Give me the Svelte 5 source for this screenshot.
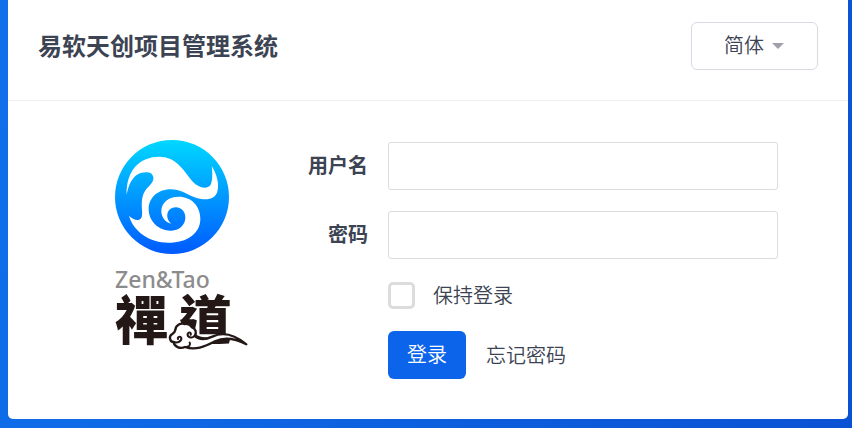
<script lang="ts">
  let lang = $state("zh-cn");
  let account = $state("");
  let password = $state("");
  let keepLogin = $state(false);

  const langs = [
    { value: "zh-cn", label: "简体" },
    { value: "zh-tw", label: "繁體" },
    { value: "en", label: "English" },
  ];

  function login(e: SubmitEvent) {
    e.preventDefault();
  }
</script>

<main class="login-panel">
  <header class="panel-head">
    <h1>易软天创项目管理系统</h1>
    <div class="lang-box">
      <select class="lang-select" aria-label="语言" bind:value={lang}>
        {#each langs as item}
          <option value={item.value}>{item.label}</option>
        {/each}
      </select>
      <svg class="lang-caret" viewBox="0 0 12 6" aria-hidden="true">
        <path d="M0 0h12L6 6z" fill="#a0a0ad" />
      </svg>
    </div>
  </header>

  <div class="panel-body">
    <svg class="logo" viewBox="0 0 134 226" role="img" aria-label="Zen&Tao 禪道">
      <defs>
        <linearGradient id="logo-fill" x1="0" y1="0" x2="0" y2="1">
          <stop offset="0" stop-color="#00d8ff" />
          <stop offset="0.5" stop-color="#0098ff" />
          <stop offset="1" stop-color="#005aff" />
        </linearGradient>
      </defs>
      <circle cx="57" cy="57" r="57" fill="url(#logo-fill)" />
      <g transform="translate(-15 -10) scale(0.33333)">
        <path
          fill="#fff"
          d="M80 195C78 120 120 80 178 80C225 80 248 115 272 148C292 174 320 180 331 166C338 155 338 130 335 108C350 130 360 165 351 188C340 212 312 210 290 204C262 196 245 178 212 178C172 178 146 205 146 237C146 275 178 303 214 302C240 301 256 284 256 262C256 245 243 232 228 232C210 232 200 245 202 260C203 270 208 276 214 281C195 278 184 260 184 243C184 218 206 200 236 200C274 200 301 228 301 266C301 310 262 338 205 338C150 338 100 305 87 257C95 265 105 271 115 270C127 268 127 255 126 240C124 215 126 195 137 180C148 166 162 158 160 142C157 125 138 125 120 130C98 138 85 165 80 195Z"
        />
      </g>
      <text class="logo-en" x="0" y="148">Zen&amp;Tao</text>
      <text class="logo-zh" x="0" y="200">禪</text>
      <text class="logo-zh" x="64" y="200">道</text>
      <g
        transform="translate(-10 122) scale(0.33333)"
        fill="none"
        stroke="#231815"
        stroke-width="7"
        stroke-linecap="round"
        stroke-linejoin="round"
      >
        <path
          fill="#fff"
          d="M240 255C225 262 207 254 206 240C194 240 190 222 202 216C208 212 210 209 211 204C212 190 226 182 238 186C248 184 256 188 261 196C272 200 276 212 269 222C282 234 300 234 322 224C350 210 382 212 424 247C388 228 356 226 330 238C298 255 270 266 240 255Z"
        />
        <path
          stroke-width="6"
          d="M206 240C218 244 230 238 229 228C226 221 217 225 219 231M269 222C260 230 246 226 248 215C252 208 260 213 257 218M240 255C252 256 258 248 254 242"
        />
      </g>
    </svg>

    <form class="login-form" onsubmit={login}>
      <label class="field-label" for="account">用户名</label>
      <input class="field-input" id="account" type="text" bind:value={account} />

      <label class="field-label" for="password">密码</label>
      <input class="field-input" id="password" type="password" bind:value={password} />

      <label class="keep-login">
        <input type="checkbox" bind:checked={keepLogin} />
        <span>保持登录</span>
      </label>

      <div class="form-actions">
        <button class="btn-primary" type="submit">登录</button>
        <a href="#reset">忘记密码</a>
      </div>
    </form>
  </div>
</main>

<style>
  :global(html) {
    min-height: 100%;
    background: linear-gradient(100deg, #106fea, #0a52d4);
  }
  :global(body) {
    margin: 0;
  }
  .login-panel {
    margin: 0 4px 0 8px;
    background: #fff;
    border-radius: 0 0 5px 5px;
    color: #3c4353;
    font-family: "Noto Sans CJK SC", sans-serif;
    font-size: 20px;
    line-height: 30px;
  }
  .panel-head {
    display: flex;
    align-items: center;
    justify-content: space-between;
    padding: 22px 30px 30px;
    border-bottom: 1px solid #eee;
  }
  h1 {
    margin: 0;
    padding-bottom: 2px;
    font-size: 24px;
    line-height: 46px;
    font-weight: 700;
  }
  .lang-box {
    display: grid;
    grid-template-columns: 1fr 12px 34px;
    align-items: center;
    width: 127px;
  }
  .lang-select {
    grid-area: 1 / 1 / 2 / 4;
    box-sizing: border-box;
    width: 100%;
    height: 48px;
    padding: 0 32px 2px;
    appearance: none;
    background: #fff;
    border: 1px solid #d8dbe4;
    border-radius: 6px;
    color: inherit;
    font: inherit;
    font-weight: 350;
    cursor: pointer;
  }
  .lang-caret {
    grid-area: 1 / 2 / 2 / 3;
    width: 12px;
    height: 6px;
    z-index: 1;
    pointer-events: none;
  }
  .panel-body {
    display: flex;
    align-items: flex-start;
    gap: 40px;
    padding: 39px 70px 40px 107px;
  }
  .logo {
    flex: none;
    width: 134px;
    height: 226px;
  }
  .logo-en {
    font: 500 23px "Noto Sans", sans-serif;
    fill: #8c8c8c;
  }
  .logo-zh {
    font: 900 53px "Noto Sans CJK TC", sans-serif;
    fill: #231815;
  }
  .login-form {
    flex: 1;
    display: grid;
    grid-template-columns: 1fr 390px;
    align-items: center;
    gap: 21px 20px;
    padding-top: 2px;
  }
  .field-label {
    padding-bottom: 2px;
    text-align: right;
    font-weight: 700;
  }
  .field-input {
    box-sizing: border-box;
    width: 100%;
    height: 48px;
    padding: 0 12px;
    border: 1px solid #dcdcdc;
    border-radius: 3px;
    background: #fff;
    color: inherit;
    font: inherit;
  }
  .keep-login {
    grid-column: 2;
    display: flex;
    align-items: center;
    gap: 18px;
    font-weight: 350;
  }
  .keep-login input {
    appearance: none;
    box-sizing: border-box;
    width: 27px;
    height: 27px;
    margin: 0;
    border: 3px solid #dcdcdc;
    border-radius: 5px;
    background: #fff;
  }
  .keep-login input:checked {
    border-color: #0c64eb;
    background: #0c64eb;
  }
  .form-actions {
    grid-column: 2;
    display: flex;
    align-items: center;
    gap: 20px;
  }
  .btn-primary {
    width: 78px;
    height: 48px;
    padding: 0 0 2px;
    border: 0;
    border-radius: 6px;
    background: #0c64eb;
    color: #fff;
    font: inherit;
    font-weight: 350;
    cursor: pointer;
  }
  .form-actions a {
    color: inherit;
    font-weight: 350;
    text-decoration: none;
  }
</style>
